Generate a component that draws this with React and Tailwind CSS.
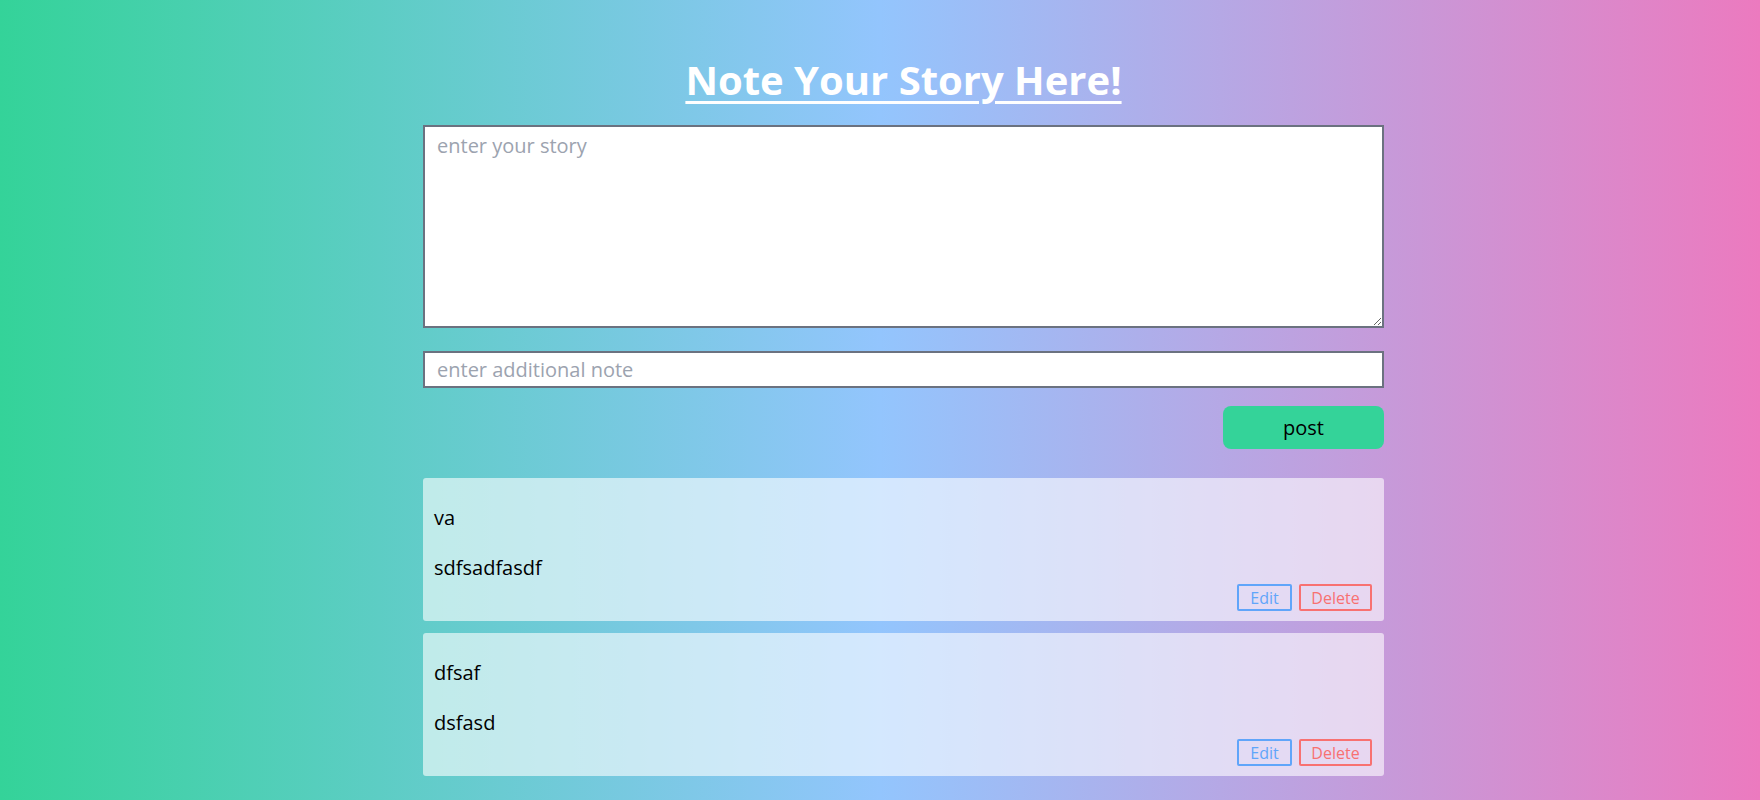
import React from "react";

const notes = [
  { title: "va", body: "sdfsadfasdf" },
  { title: "dfsaf", body: "dsfasd" },
];

export default function App() {
  return (
    <div
      className="min-h-screen w-full bg-[linear-gradient(to_right,#34d399,#93c5fd,#ec7abf)] pb-[26px]"
      style={{ fontFamily: '"Open Sans", "Noto Sans", sans-serif' }}
    >
      <div className="ml-[423px] w-[961px] flex flex-col pt-[54px]">
        <h1 className="text-center text-[40px] leading-[52px] font-bold text-white underline decoration-[3px] underline-offset-[6px]">
          Note Your Story Here!
        </h1>
        <textarea
          placeholder="enter your story"
          className="mt-[19px] h-[203px] w-full border-2 border-[#6b7280] bg-white px-[12px] py-[5px] text-[20px] leading-[28px] text-black placeholder:text-[#9ca3af] outline-none"
        />
        <input
          placeholder="enter additional note"
          className="mt-[23px] h-[37px] w-full border-2 border-[#6b7280] bg-white px-[12px] text-[20px] text-black placeholder:text-[#9ca3af] outline-none"
        />
        <div className="mt-[18px] flex justify-end">
          <button className="h-[43px] w-[161px] rounded-[8px] bg-[#34d399] text-[20px] text-black">
            post
          </button>
        </div>
        <div className="mt-[29px] flex flex-col gap-[12px]">
          {notes.map((n, i) => (
            <div
              key={i}
              className="h-[143px] rounded-[3px] bg-white/60 pl-[11px] pr-[12px] pt-[26px] pb-[10px] flex flex-col"
            >
              <p className="text-[20px] leading-[28px] text-black">{n.title}</p>
              <p className="mt-[22px] text-[20px] leading-[28px] text-black">{n.body}</p>
              <div className="mt-auto flex justify-end gap-[7px]">
                <button className="h-[27px] w-[55px] rounded-[2px] border-2 border-[#60a5fa] text-[16px] leading-none text-[#60a5fa]">
                  Edit
                </button>
                <button className="h-[27px] w-[73px] rounded-[2px] border-2 border-[#f87171] text-[16px] leading-none text-[#f87171]">
                  Delete
                </button>
              </div>
            </div>
          ))}
        </div>
      </div>
    </div>
  );
}
